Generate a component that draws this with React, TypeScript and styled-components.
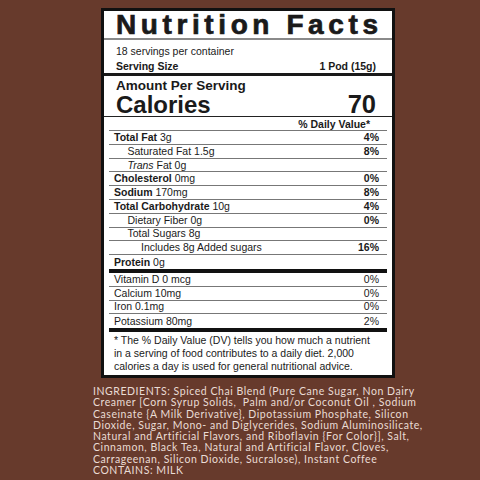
import styled, { createGlobalStyle } from 'styled-components';

const GlobalStyle = createGlobalStyle`
    html, body {
        margin: 0;
        padding: 0;
        background: #673a2c;
    }
`;

type Nutrient = { name: string; amount?: string; dv?: string; bold?: boolean; indent?: number; italic?: string };

const nutrients: Nutrient[] = [
    { name: 'Total Fat', amount: '3g', dv: '4%', bold: true },
    { name: 'Saturated Fat 1.5g', dv: '8%', indent: 1 },
    { name: 'Fat 0g', italic: 'Trans', indent: 1 },
    { name: 'Cholesterol', amount: '0mg', dv: '0%', bold: true },
    { name: 'Sodium', amount: '170mg', dv: '8%', bold: true },
    { name: 'Total Carbohydrate', amount: '10g', dv: '4%', bold: true },
    { name: 'Dietary Fiber 0g', dv: '0%', indent: 1 },
    { name: 'Total Sugars 8g', indent: 1 },
    { name: 'Includes 8g Added sugars', dv: '16%', indent: 2 },
];

const vitamins = [
    ['Vitamin D 0 mcg', '0%'],
    ['Calcium 10mg', '0%'],
    ['Iron 0.1mg', '0%'],
    ['Potassium 80mg', '2%'],
];

// ingredient lines broken where the printed label breaks them
const ingredientLines = [
    'INGREDIENTS: Spiced Chai Blend (Pure Cane Sugar, Non Dairy',
    'Creamer [Corn Syrup Solids,\u00a0 Palm and/or Coconut Oil , Sodium',
    'Caseinate {A Milk Derivative}, Dipotassium Phosphate, Silicon',
    'Dioxide, Sugar, Mono- and Diglycerides, Sodium Aluminosilicate,',
    'Natural and Artificial Flavors, and Riboflavin {For Color}], Salt,',
    'Cinnamon, Black Tea, Natural and Artificial Flavor, Cloves,',
    'Carrageenan, Silicon Dioxide, Sucralose), Instant Coffee',
    'CONTAINS: MILK',
];

export default function App() {
    return (
        <Page>
            <GlobalStyle />
            <Label>
                <Title>Nutrition Facts</Title>
                <Servings>
                    <SmallLine>18 servings per container</SmallLine>
                    <SizeLine>
                        <span>Serving Size</span>
                        <span>1 Pod (15g)</span>
                    </SizeLine>
                </Servings>
                <Amount>
                    <AmountHead>Amount Per Serving</AmountHead>
                    <CaloriesLine>
                        <span>Calories</span>
                        <CalNum>70</CalNum>
                    </CaloriesLine>
                </Amount>
                <Inner>
                    <DvHead>% Daily Value*</DvHead>
                    {nutrients.map((n, i) => (
                        <Row key={i} $indent={n.indent || 0}>
                            <span>
                                {n.italic && <i>{n.italic} </i>}
                                {n.bold ? <b>{n.name}</b> : n.name}
                                {n.amount && ' ' + n.amount}
                            </span>
                            <b>{n.dv}</b>
                        </Row>
                    ))}
                    <Row $indent={0} $last>
                        <span><b>Protein</b> 0g</span>
                    </Row>
                    <ThickBar />
                    {vitamins.map(([name, dv], i) => (
                        <Row key={name} $indent={0} $last={i === vitamins.length - 1}>
                            <span>{name}</span>
                            <span>{dv}</span>
                        </Row>
                    ))}
                    <ThickBar />
                    <Footnote>
                        * The % Daily Value (DV) tells you how much a nutrient in a serving of food contributes to a daily diet. 2,000 calories a day is used for general nutritional advice.
                    </Footnote>
                </Inner>
            </Label>
            <Ingredients>
                {ingredientLines.map(line => (
                    <IngLine key={line}>{line}</IngLine>
                ))}
            </Ingredients>
        </Page>
    );
}

const Page = styled.div`
    width: 480px;
    height: 480px;
    overflow: hidden;
    padding-top: 8px;
    box-sizing: border-box;
    font-family: 'Liberation Sans', Arial, sans-serif;
`;

const Label = styled.div`
    margin-left: 101px;
    width: 294px;
    height: 370px;
    box-sizing: border-box;
    border: 3px solid #111;
    background: #fff;
    color: #1a1a1a;
    display: flex;
    flex-direction: column;
`;

const Title = styled.div`
    height: 27px;
    border-bottom: 2px solid #8a8a8a;
    font-size: 28px;
    font-weight: 900;
    letter-spacing: 4.6px;
    line-height: 28px;
    padding-left: 12px;
    white-space: nowrap;
    -webkit-text-stroke: 0.7px #1a1a1a;
`;

const Servings = styled.div`
    height: 36px;
    padding: 4px 16px 0 12px;
    box-sizing: border-box;
    border-bottom: 3px solid #1a1a1a;
    font-size: 10.5px;
`;

const SmallLine = styled.div`
    line-height: 14px;
`;

const SizeLine = styled.div`
    display: flex;
    justify-content: space-between;
    font-weight: bold;
    line-height: 16px;
`;

const Amount = styled.div`
    height: 41px;
    padding: 3px 16px 0 12px;
    box-sizing: border-box;
    border-bottom: 1px solid #222;
`;

const AmountHead = styled.div`
    font-size: 13.5px;
    font-weight: bold;
    line-height: 14px;
`;

const CaloriesLine = styled.div`
    display: flex;
    justify-content: space-between;
    align-items: baseline;
    font-size: 24px;
    font-weight: bold;
    line-height: 22px;
`;

const CalNum = styled.span`
    font-size: 25.5px;
`;

const Inner = styled.div`
    padding: 0 5px 0 5px;
    font-size: 10.5px;
`;

const DvHead = styled.div`
    height: 14px;
    box-sizing: border-box;
    border-bottom: 1px solid #777;
    text-align: right;
    padding-right: 17px;
    font-weight: bold;
    line-height: 14px;
`;

const Row = styled.div<{ $indent: number; $last?: boolean }>`
    height: 13.8px;
    box-sizing: border-box;
    border-bottom: ${p => (p.$last ? 'none' : '1px solid #777')};
    display: flex;
    justify-content: space-between;
    align-items: center;
    padding: 0 8px 0 ${p => 5 + p.$indent * 13.5}px;
    line-height: 13px;
    white-space: nowrap;
    & b {
        font-weight: bold;
    }
`;

const ThickBar = styled.div`
    height: 4px;
    background: #111;
`;

const Footnote = styled.div`
    padding: 2px 10px 0 5px;
    font-size: 10.5px;
    line-height: 12.7px;
`;

const Ingredients = styled.div`
    margin: 8px 0 0 93px;
    color: #eadcd5;
    font-family: Lato, 'Noto Sans', sans-serif;
    font-size: 10.5px;
    letter-spacing: 0.55px;
`;

const IngLine = styled.div`
    height: 11.3px;
    line-height: 11.3px;
    white-space: nowrap;
`;
